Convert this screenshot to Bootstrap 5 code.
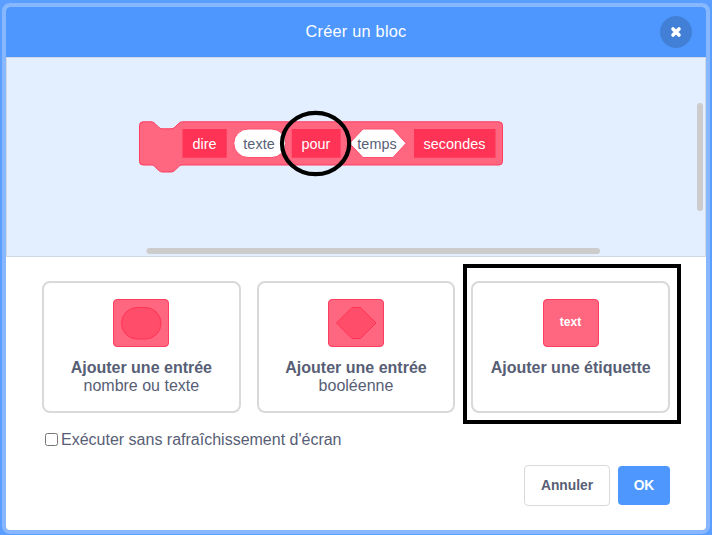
<!DOCTYPE html>
<html lang="fr">
<head>
<meta charset="utf-8">
<meta name="viewport" content="width=device-width, initial-scale=1">
<title>Créer un bloc</title>
<link href="https://cdn.jsdelivr.net/npm/bootstrap@5.3.0/dist/css/bootstrap.min.css" rel="stylesheet">
<style>
body{background:#5a9fff;font-family:"Liberation Sans",Arial,sans-serif;color:#575e75;height:535px;padding:3px 2px 1px;overflow:hidden}
.dialog{height:531px;border:4px solid #86b7ff;border-radius:8px;background:#fff;overflow:hidden}
.dialog-head{height:50px;background:#4d97ff;padding-right:14px}
.dialog-title{font-size:16.3px;letter-spacing:.25px;line-height:24px;padding:0 0 2px 46px}
.close-btn{width:32px;height:32px;background:#4280d7}
.workspace{height:200px;background:#e3efff;border:1px solid #d2d9e6}
.workspace svg{width:698px;height:198px}
.workspace text{font-size:14.4px;text-anchor:middle}
.options{padding:24px 36px 0;gap:16px;grid-template-columns:repeat(3,minmax(0,1fr))}
.option{border:2px solid #d9d9d9;border-radius:8px;height:132px;padding:16px 0 0;background:#fff;color:#575e75;font-size:16px;line-height:18px}
.option svg{width:56px;height:48px;margin-bottom:12px}
.outline-mark{inset:-17px -11px -11px -8px;border:4px solid #000;pointer-events:none}
.refresh{padding:19px 0 0 39px;font-size:16px;line-height:14px}
.refresh input{width:13px;height:13px;margin:0 3px 1px 0}
.refresh span{padding-top:1px}
.actions{padding:18px 36px 0;gap:8px}
.actions .btn{font-size:13.8px;line-height:20px;border-radius:4px;padding:0}
.cancel{width:86px;height:41px;border:1px solid #d9d9d9;color:#575e75}
.confirm{width:52px;height:39px;background:#4d97ff;color:#fff}
</style>
<script src="https://cdn.jsdelivr.net/npm/bootstrap@5.3.0/dist/js/bootstrap.bundle.min.js"></script>
</head>
<body>
<main class="dialog d-flex flex-column">
  <header class="dialog-head d-flex align-items-center text-white flex-shrink-0">
    <h1 class="dialog-title fw-normal text-center flex-grow-1 mb-0">Créer un bloc</h1>
    <button class="close-btn btn rounded-circle border-0 p-0 d-flex align-items-center justify-content-center" type="button" aria-label="Fermer">
      <svg width="12" height="12" viewBox="0 0 12 12"><path d="M3 3l6 6M9 3L3 9" stroke="#fff" stroke-width="3.600" stroke-linecap="round"/></svg>
    </button>
  </header>

  <section class="workspace flex-shrink-0">
    <svg class="d-block" viewBox="7 58 698 198">
      <path d="M143 121.800H151c2 0 3 .8 4 1.800l3.500 3.500q1.700 1.700 4 1.700H171q2.300 0 4-1.700l3.500-3.500c1-1 2-1.800 4-1.800H499q3.500 0 3.500 3.500V161.500q0 3.500-3.500 3.500H182.500c-2 0-3 .8-4 1.800l-3.500 3.500q-1.700 1.700-4 1.700H162.500q-2.300 0-4-1.700l-3.500-3.500c-1-1-2-1.800-4-1.800H143q-3.500 0-3.500-3.500V125.300q0-3.500 3.500-3.500Z" fill="#ff6680" stroke="#ff3d5e"/>
      <g fill="#ff3355">
        <rect x="182.500" y="129" width="44.200" height="28.700"/>
        <rect x="291.800" y="129" width="48.800" height="28.700"/>
        <rect x="414" y="129" width="81.500" height="28.700"/>
      </g>
      <rect x="233.800" y="129" width="52" height="28.500" rx="14.250" fill="#fff" stroke="#ff4d6a"/>
      <path d="M363 129H393L406 143.300L393 157.500H363L349.500 143.300Z" fill="#fff" stroke="#ff4d6a"/>
      <g fill="#fff">
        <text x="204.500" y="149">dire</text>
        <text x="316" y="149">pour</text>
        <text x="454.500" y="149" textLength="62">secondes</text>
      </g>
      <g fill="#575e75">
        <text x="259" y="149" textLength="31.500">texte</text>
        <text x="377" y="149" textLength="39.500">temps</text>
      </g>
      <ellipse cx="315.600" cy="143.500" rx="33.600" ry="30.700" fill="none" stroke="#000" stroke-width="4.200"/>
      <rect x="697" y="103" width="6" height="108" rx="3" fill="#ccc"/>
      <rect x="146.500" y="248" width="453.500" height="6" rx="3" fill="#ccc"/>
    </svg>
  </section>

  <section class="options d-grid">
    <button class="option w-100 d-flex flex-column align-items-center" type="button">
      <svg viewBox="0 0 56 48"><rect x=".5" y=".5" width="55" height="47" rx="3.500" fill="#ff6680" stroke="#ff3d5e"/><rect x="8.500" y="8.500" width="39.500" height="31.500" rx="15.750" fill="#ff4d6a" stroke="#ff3355"/></svg>
      <strong>Ajouter une entrée</strong>
      <span>nombre ou texte</span>
    </button>
    <button class="option w-100 d-flex flex-column align-items-center" type="button">
      <svg viewBox="0 0 56 48"><rect x=".5" y=".5" width="55" height="47" rx="3.500" fill="#ff6680" stroke="#ff3d5e"/><path d="M24 8.500H32.500L48 24L32.500 39.500H24L8.500 24Z" fill="#ff4d6a" stroke="#ff3355"/></svg>
      <strong>Ajouter une entrée</strong>
      <span>booléenne</span>
    </button>
    <div class="position-relative">
      <button class="option w-100 d-flex flex-column align-items-center" type="button">
        <svg viewBox="0 0 56 48"><rect x=".5" y=".5" width="55" height="47" rx="3.500" fill="#ff6680" stroke="#ff3d5e"/><text x="27.500" y="27" text-anchor="middle" font-size="12" font-weight="700" fill="#fff">text</text></svg>
        <strong>Ajouter une étiquette</strong>
      </button>
      <div class="outline-mark position-absolute"></div>
    </div>
  </section>

  <label class="refresh d-flex align-items-center"><input type="checkbox"><span>Exécuter sans rafraîchissement d'écran</span></label>

  <footer class="actions d-flex justify-content-end align-items-center">
    <button class="cancel btn fw-bold" type="button">Annuler</button>
    <button class="confirm btn fw-bold border-0" type="button">OK</button>
  </footer>
</main>
</body>
</html>
